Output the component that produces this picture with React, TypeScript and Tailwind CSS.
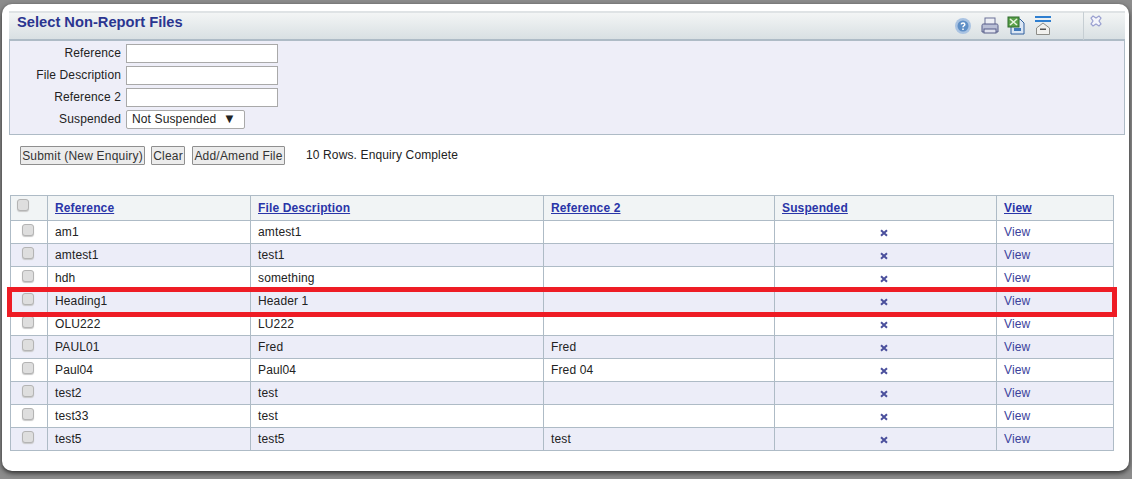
const rows = [
  { ref: "am1", desc: "amtest1", ref2: "" },
  { ref: "amtest1", desc: "test1", ref2: "" },
  { ref: "hdh", desc: "something", ref2: "" },
  { ref: "Heading1", desc: "Header 1", ref2: "" },
  { ref: "OLU222", desc: "LU222", ref2: "" },
  { ref: "PAUL01", desc: "Fred", ref2: "Fred" },
  { ref: "Paul04", desc: "Paul04", ref2: "Fred 04" },
  { ref: "test2", desc: "test", ref2: "" },
  { ref: "test33", desc: "test", ref2: "" },
  { ref: "test5", desc: "test5", ref2: "test" },
];

function Check({ className }: { className: string }) {
  return (
    <span
      className={`block h-[12px] w-[12px] rounded-[3px] border border-[#b4b4b4] bg-[#dedede] shadow-[0_1px_1px_#c8c8c8] ${className}`}
    />
  );
}

function Cross() {
  return (
    <svg width="8" height="8" viewBox="0 0 8 8" className="mx-auto mr-[108px] mt-[2px] block">
      <path d="M1 1.2 7 6.8M7 1.2 1 6.8" stroke="#4a4f9c" strokeWidth="2" fill="none" />
    </svg>
  );
}

function Toolbar() {
  return (
    <div className="-mt-[1px] flex items-center">
      <svg width="18" height="18" viewBox="0 0 18 18" className="mr-[8px]">
        <circle cx="9" cy="9" r="8" fill="#a9c3e2" />
        <circle cx="9" cy="9" r="5.5" fill="#5f8fc6" />
        <path d="M7.2 7.4c.2-2 3.6-2 3.6 0 0 1.4-1.8 1.3-1.8 2.8M9 11.6v1.4" stroke="#fff" strokeWidth="1.5" fill="none" />
      </svg>
      <svg width="20" height="18" viewBox="0 0 20 18" className="mr-[7px]">
        <rect x="5" y="1" width="10" height="7" fill="#eef0f6" stroke="#6a7096" />
        <path d="M2 8.5C2 7 3 7 4 7h12c1 0 2 0 2 1.5V15H2z" fill="#b9bfd6" stroke="#565c88" />
        <rect x="4" y="12" width="12" height="4" fill="#dfe2ee" stroke="#565c88" />
      </svg>
      <svg width="19" height="19" viewBox="0 0 19 19" className="mr-[9px]">
        <path d="M4 3h9l4 4v11H4z" fill="#dbe6f4" stroke="#2e5f9e" />
        <path d="M7 12h7v3H7z" fill="#3f78b8" />
        <rect x="1" y="1" width="11" height="10" fill="#5aa04a" stroke="#2d6b2a" />
        <path d="M3 3l7 6M10 3 3 9" stroke="#e8f4e0" strokeWidth="1.6" />
      </svg>
      <svg width="16" height="19" viewBox="0 0 16 19" className="mr-[32px]">
        <rect x="0" y="0" width="16" height="2" fill="#2f7fd0" />
        <rect x="0" y="4" width="16" height="2" fill="#2f7fd0" />
        <path d="M8 7 14.500 12v6.500h-13V12z" fill="#f1f1ee" stroke="#8d8d88" />
        <rect x="5" y="12.500" width="6" height="1.500" fill="#555" />
      </svg>
      <div className="flex h-[28px] w-[42px] border-l border-[#c6ced3] pl-[6px] pt-[3px]">
        <svg width="12" height="12" viewBox="0 0 12 12">
          <path d="M3 1 6 3 9 1 11 3 9 6 11 9 9 11 6 9 3 11 1 9 3 6 1 3z" fill="#f4f5fb" stroke="#9aa0d0" strokeWidth="1.2" />
        </svg>
      </div>
    </div>
  );
}

function Field({ label }: { label: string }) {
  return (
    <div className="flex h-[22px] items-center">
      <label className="w-[116px] pr-[5px] text-right">{label}</label>
      <input type="text" className="h-[19px] w-[152px] border border-[#a9a9a9] bg-white" />
    </div>
  );
}

export default function App() {
  return (
    <div
      className="h-[479px] w-[1132px] overflow-hidden bg-[#8c8c8c] pl-[2px] pt-[4px] text-[12px] leading-[14px] tracking-[0.13px] text-[#222]"
      style={{ fontFamily: '"Liberation Sans", Arial, sans-serif' }}
    >
      <div className="h-[467px] w-[1127px] rounded-[10px] bg-white pl-[7px] pr-[4px] pt-[7px] shadow-[0_2px_5px_#2a2a2a]">
        <div className="flex h-[30px] w-[1116px] items-center justify-between border-b-2 border-t-2 border-b-[#aebbc6] border-t-[#dfe3e5] bg-gradient-to-b from-[#f3f5f5] to-[#d9e0e3] pl-[8px]">
          <h1 className="-mt-[8px] text-[14.7px] font-bold tracking-normal text-[#2a3590]">Select Non-Report Files</h1>
          <Toolbar />
        </div>
        <div className="h-[94px] w-[1116px] border border-t-0 border-[#aebbc6] bg-[#eeeef8] pt-[1px]">
          <Field label="Reference" />
          <Field label="File Description" />
          <Field label="Reference 2" />
          <div className="flex h-[22px] items-center">
            <label className="w-[116px] pr-[5px] text-right">Suspended</label>
            <div className="flex h-[19px] w-[119px] items-center justify-between rounded-[2px] border border-[#a9a9a9] bg-white pl-[5px] pr-[8px]">
              <span>Not Suspended</span>
              <span className="text-[13px]">▼</span>
            </div>
          </div>
        </div>
        <div className="flex h-[60px] items-start pl-[11px] pt-[11px]">
          <button className="mr-[6px] h-[19px] w-[125px] rounded-[1px] border border-[#8f8f8f] bg-[#ececec] text-[12px] tracking-[0.2px] text-[#333]">
            Submit (New Enquiry)
          </button>
          <button className="mr-[7px] h-[19px] w-[34px] rounded-[1px] border border-[#8f8f8f] bg-[#ececec] text-[12px] tracking-[0.2px] text-[#333]">
            Clear
          </button>
          <button className="h-[19px] w-[93px] rounded-[1px] border border-[#8f8f8f] bg-[#ececec] text-[12px] tracking-[0.2px] text-[#333]">
            Add/Amend File
          </button>
          <span className="ml-[21px] mt-[2px]">10 Rows. Enquiry Complete</span>
        </div>
        <div className="relative ml-[1px] w-[1103px]">
          <table className="w-[1103px] table-fixed border-collapse border border-[#aebbc6]">
            <colgroup>
              <col className="w-[37px]" />
              <col className="w-[203px]" />
              <col className="w-[293px]" />
              <col className="w-[231px]" />
              <col className="w-[222px]" />
              <col className="w-[117px]" />
            </colgroup>
            <thead>
              <tr className="h-[25px] bg-[#f1f4f5] font-bold">
                <th className="border border-[#aebbc6] pl-[6px]">
                  <Check className="-mt-[6px]" />
                </th>
                {["Reference", "File Description", "Reference 2", "Suspended", "View"].map((h) => (
                  <th key={h} className="border border-[#aebbc6] pl-[7px] text-left">
                    <a href="#" className="text-[#2a35a8] underline">{h}</a>
                  </th>
                ))}
              </tr>
            </thead>
            <tbody>
              {rows.map((r, i) => (
                <tr key={r.ref} className={`h-[23px] ${i % 2 === 1 ? "bg-[#ecedf8]" : "bg-white"}`}>
                  <td className="border border-[#aebbc6] pl-[11px]">
                    <Check className="-mt-[5px]" />
                  </td>
                  <td className="border border-[#aebbc6] pl-[7px]">{r.ref}</td>
                  <td className="border border-[#aebbc6] pl-[7px]">{r.desc}</td>
                  <td className="border border-[#aebbc6] pl-[7px]">{r.ref2}</td>
                  <td className="border border-[#aebbc6]"><Cross /></td>
                  <td className="border border-[#aebbc6] pl-[7px]">
                    <a href="#" className="text-[#3b429c]">View</a>
                  </td>
                </tr>
              ))}
            </tbody>
          </table>
          <div className="pointer-events-none absolute left-[-3px] top-[92px] h-[30px] w-[1110px] border-[5px] border-[#ee1c25]" />
        </div>
      </div>
    </div>
  );
}
